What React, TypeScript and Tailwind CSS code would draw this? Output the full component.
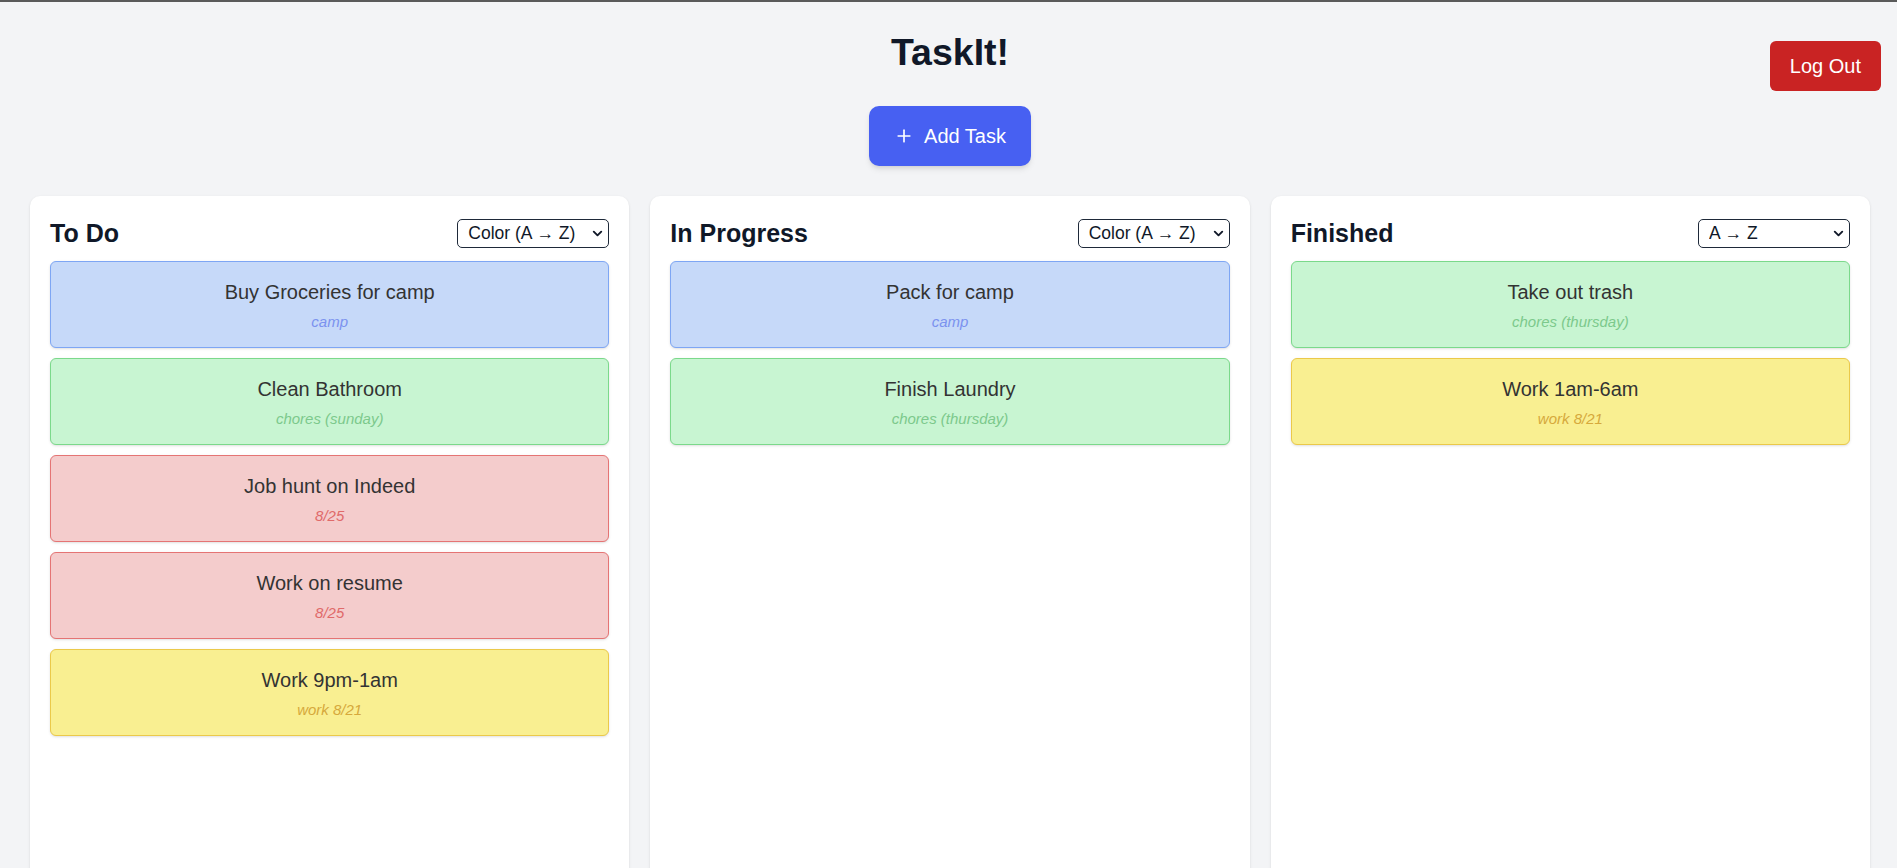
import { Plus, ChevronDown } from "lucide-react";

type Tone = "blue" | "green" | "red" | "yellow";

type Task = { title: string; note: string; tone: Tone };

const tones: Record<Tone, { card: string; note: string }> = {
  blue: { card: "bg-[#c6d9f9] border-[#7ea6f4]", note: "text-[#7b92ef]" },
  green: { card: "bg-[#c8f5d2] border-[#7bd98b]", note: "text-[#7cc98c]" },
  red: { card: "bg-[#f4cccc] border-[#e57474]", note: "text-[#e06a6a]" },
  yellow: { card: "bg-[#f9ef91] border-[#ebc94a]", note: "text-[#d6a93c]" },
};

const columns: { name: string; sort: string; tasks: Task[] }[] = [
  {
    name: "To Do",
    sort: "Color (A → Z)",
    tasks: [
      { title: "Buy Groceries for camp", note: "camp", tone: "blue" },
      { title: "Clean Bathroom", note: "chores (sunday)", tone: "green" },
      { title: "Job hunt on Indeed", note: "8/25", tone: "red" },
      { title: "Work on resume", note: "8/25", tone: "red" },
      { title: "Work 9pm-1am", note: "work 8/21", tone: "yellow" },
    ],
  },
  {
    name: "In Progress",
    sort: "Color (A → Z)",
    tasks: [
      { title: "Pack for camp", note: "camp", tone: "blue" },
      { title: "Finish Laundry", note: "chores (thursday)", tone: "green" },
    ],
  },
  {
    name: "Finished",
    sort: "A → Z",
    tasks: [
      { title: "Take out trash", note: "chores (thursday)", tone: "green" },
      { title: "Work 1am-6am", note: "work 8/21", tone: "yellow" },
    ],
  },
];

const sortOptions = ["A → Z", "Z → A", "Color (A → Z)", "Color (Z → A)"];

function TaskCard({ task }: { task: Task }) {
  const t = tones[task.tone];
  return (
    <div className={`border rounded-md p-[15px] text-center shadow-sm ${t.card}`}>
      <div className="text-[20px] leading-[30px] text-[#333]">{task.title}</div>
      <div className={`mt-[5px] text-[15px] leading-[20px] italic ${t.note}`}>{task.note}</div>
    </div>
  );
}

function SortSelect({ value }: { value: string }) {
  return (
    <div className="relative">
      <select
        defaultValue={value}
        className="block h-[29px] w-[152px] appearance-none rounded-[5px] border border-gray-800 bg-white pl-[10px] text-[17.5px] text-gray-900"
      >
        {sortOptions.map((o) => (
          <option key={o}>{o}</option>
        ))}
      </select>
      <ChevronDown
        size={15}
        strokeWidth={3}
        className="pointer-events-none absolute right-[4px] top-[7px] text-gray-900"
      />
    </div>
  );
}

export default function App() {
  return (
    <div
      className="relative h-screen overflow-hidden border-t-2 border-[#5a5a5a] bg-[#f3f4f6] pt-7 pl-[30px] pr-[27px]"
      style={{ fontFamily: '"Liberation Sans", Arial, sans-serif' }}
    >
      <h1 className="text-center text-[37.5px] leading-[45px] font-bold text-gray-900">TaskIt!</h1>

      <button className="absolute top-[39px] right-[16px] rounded-[6px] bg-[#c92323] px-5 py-2.5 text-[20px] leading-[30px] text-white">
        Log Out
      </button>

      <div className="mt-[31px] flex justify-center">
        <button className="flex items-center gap-2.5 rounded-[10px] bg-[#4760f2] px-[25px] py-[15px] text-[20px] leading-[30px] text-white shadow-md">
          <Plus size={20} strokeWidth={2} />
          Add Task
        </button>
      </div>

      <div className="mt-7.5 grid grid-cols-3 gap-[21px]">
        {columns.map((col) => (
          <div key={col.name} className="min-h-[720px] rounded-[10px] bg-white p-5 shadow-sm">
            <div className="mb-2.5 flex items-center justify-between">
              <h2 className="text-[25px] leading-[35px] font-bold text-gray-900">{col.name}</h2>
              <SortSelect value={col.sort} />
            </div>
            <div className="flex flex-col gap-2.5">
              {col.tasks.map((task) => (
                <TaskCard key={task.title} task={task} />
              ))}
            </div>
          </div>
        ))}
      </div>
    </div>
  );
}
